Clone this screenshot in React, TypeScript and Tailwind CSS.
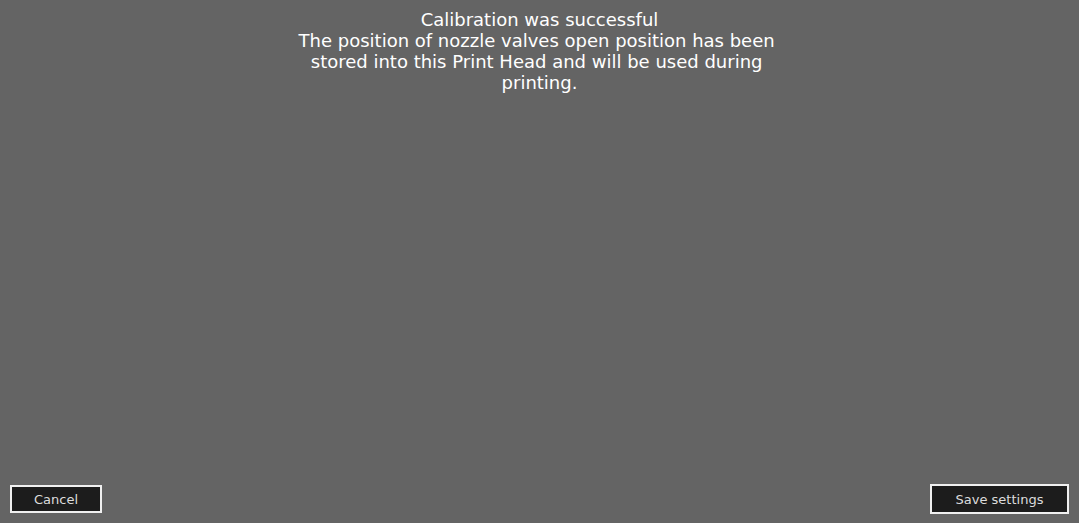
export default function App() {
  return (
    <div
      className="w-[1079px] h-[523px] bg-[#646464] flex flex-col justify-between"
      style={{ fontFamily: '"DejaVu Sans", sans-serif' }}
    >
      <div className="pt-[9px] flex flex-col items-center text-[18px] leading-[21px] text-white whitespace-pre">
        <p>Calibration was successful</p>
        <p>{"The position of nozzle valves open position has been\u00a0"}</p>
        <p>{"stored into this Print Head and will be used during\u00a0"}</p>
        <p>printing.</p>
      </div>
      <div className="flex justify-between items-center px-[10px] pb-[9px]">
        <button className="w-[92px] h-[28px] pt-[2px] bg-[#1c1c1c] border-2 border-[#f0f0f0] text-[13px] text-[#dcdcdc]">
          Cancel
        </button>
        <button className="w-[139px] h-[30px] pt-[2px] bg-[#1c1c1c] border-2 border-[#f0f0f0] text-[13px] text-[#dcdcdc]">
          Save settings
        </button>
      </div>
    </div>
  );
}
